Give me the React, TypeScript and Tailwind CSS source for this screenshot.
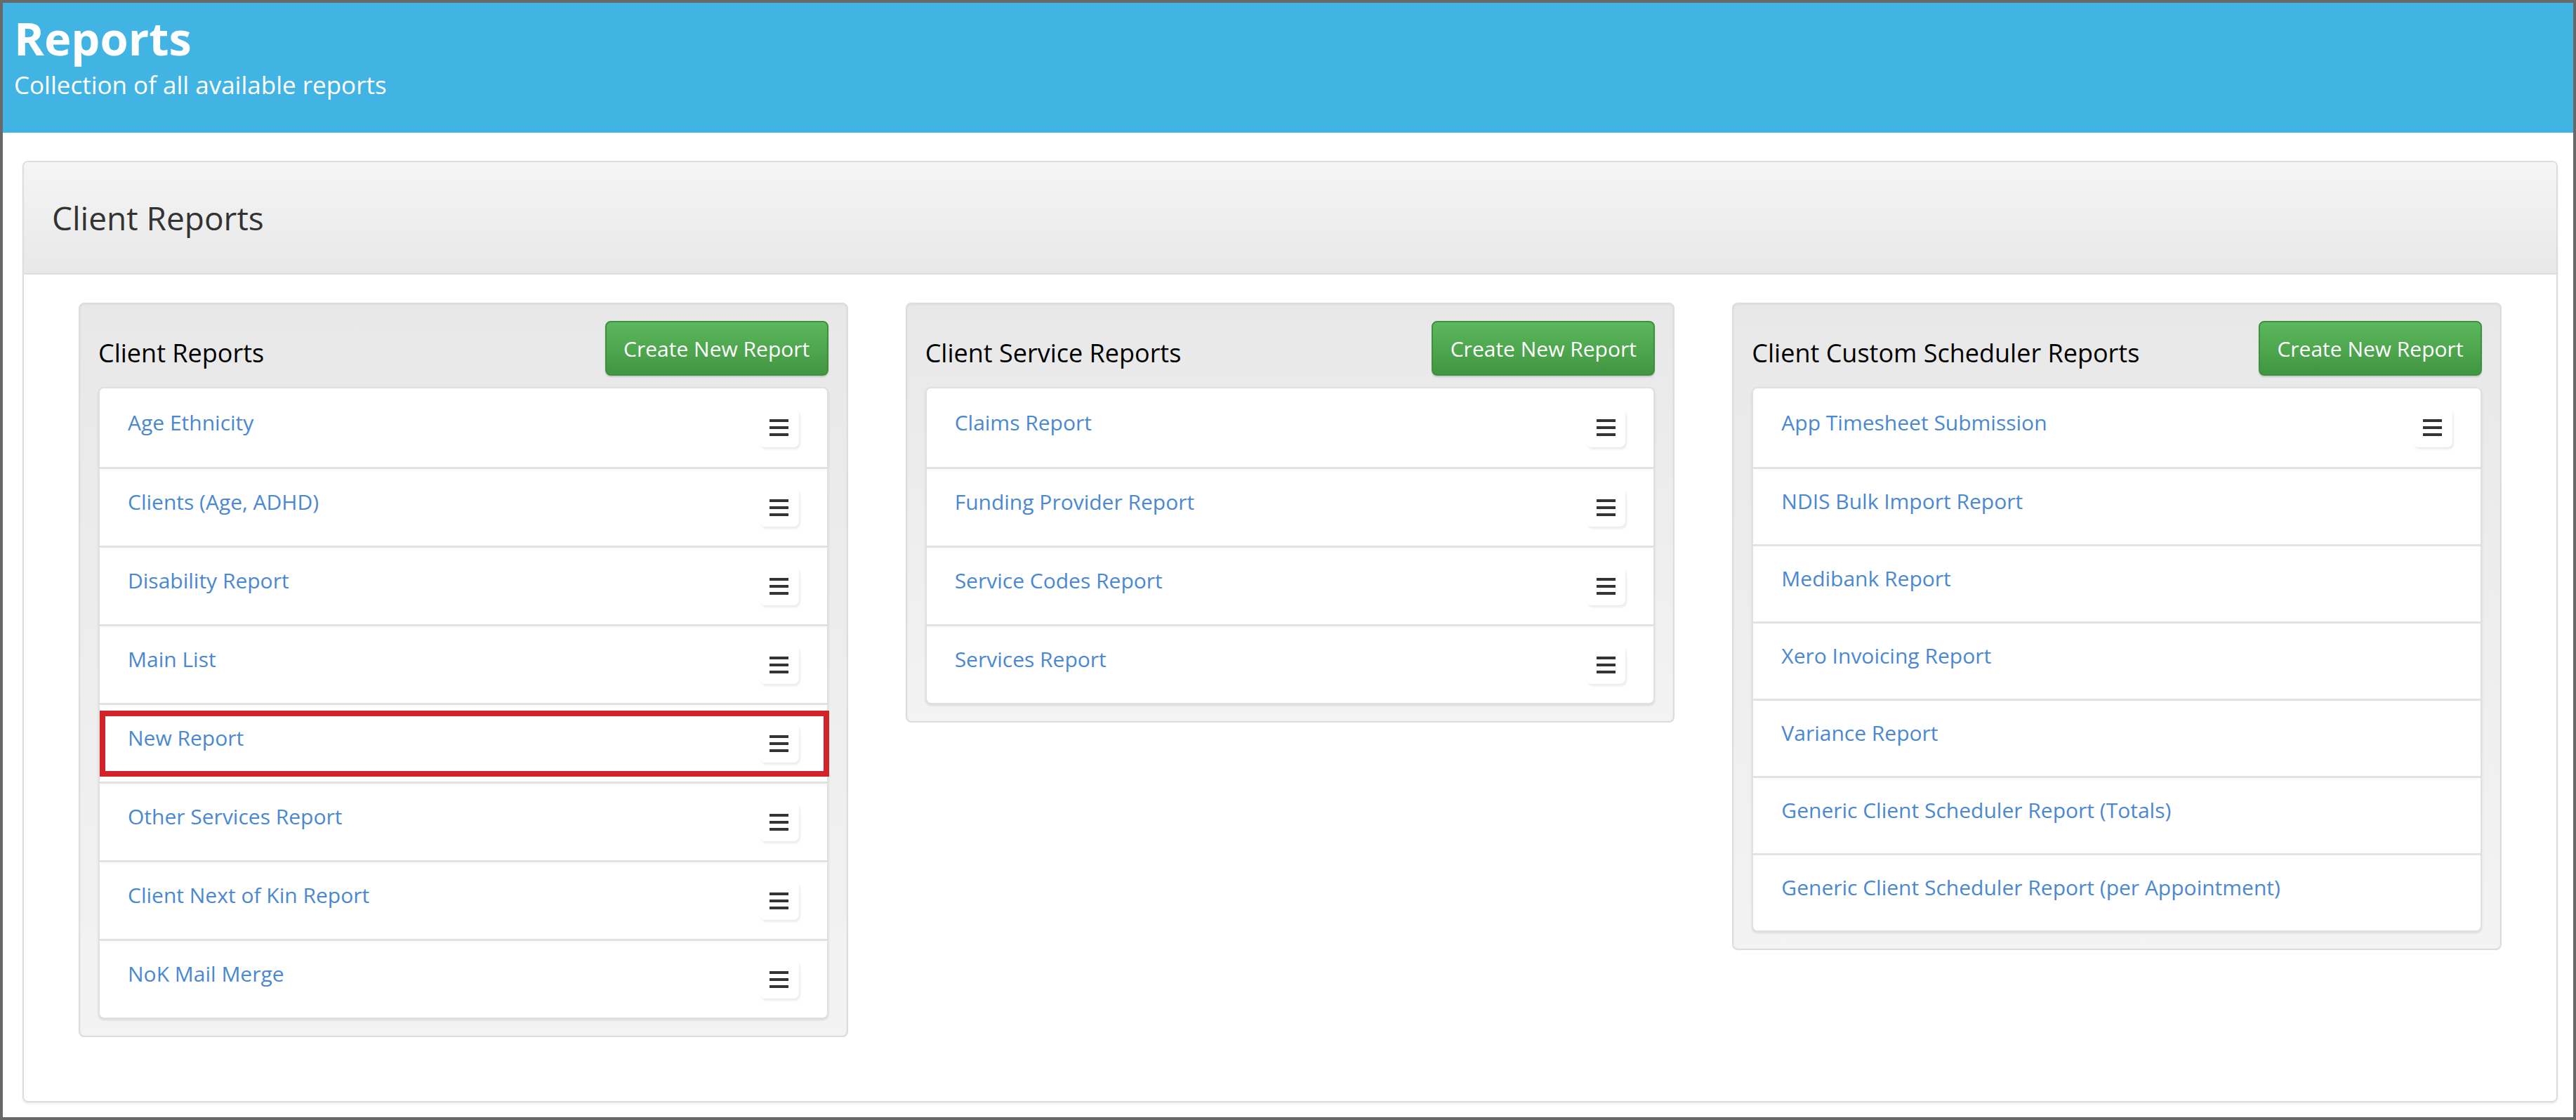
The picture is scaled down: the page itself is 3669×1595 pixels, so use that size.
import React from "react";

type Report = { name: string; menu: boolean; flagged?: boolean };

const groups: { title: string; reports: Report[] }[] = [
  {
    title: "Client Reports",
    reports: [
      { name: "Age Ethnicity", menu: true },
      { name: "Clients (Age, ADHD)", menu: true },
      { name: "Disability Report", menu: true },
      { name: "Main List", menu: true },
      { name: "New Report", menu: true, flagged: true },
      { name: "Other Services Report", menu: true },
      { name: "Client Next of Kin Report", menu: true },
      { name: "NoK Mail Merge", menu: true },
    ],
  },
  {
    title: "Client Service Reports",
    reports: [
      { name: "Claims Report", menu: true },
      { name: "Funding Provider Report", menu: true },
      { name: "Service Codes Report", menu: true },
      { name: "Services Report", menu: true },
    ],
  },
  {
    title: "Client Custom Scheduler Reports",
    reports: [
      { name: "App Timesheet Submission", menu: true },
      { name: "NDIS Bulk Import Report", menu: false },
      { name: "Medibank Report", menu: false },
      { name: "Xero Invoicing Report", menu: false },
      { name: "Variance Report", menu: false },
      { name: "Generic Client Scheduler Report (Totals)", menu: false },
      { name: "Generic Client Scheduler Report (per Appointment)", menu: false },
    ],
  },
];

const font = { fontFamily: '"Open Sans", "Noto Sans", sans-serif' };

function MenuButton() {
  return (
    <button className="flex h-[55px] w-[56px] flex-col items-center justify-center gap-[6px] rounded-[8px] bg-white shadow-[2px_3px_3px_rgba(0,0,0,0.08)]">
      <span className="h-[4px] w-[27px] bg-[#333]" />
      <span className="h-[4px] w-[27px] bg-[#333]" />
      <span className="h-[4px] w-[27px] bg-[#333]" />
    </button>
  );
}

function ReportRow({ report, first }: { report: Report; first: boolean }) {
  return (
    <div
      className={`relative flex items-center justify-between px-[40px] ${
        report.menu ? "h-[112px]" : "h-[110px]"
      } ${first ? "" : "border-t-[3px] border-[#e2e2e2]"}`}
    >
      <a className="mb-[16px] text-[30px] text-[#4a88d2]">{report.name}</a>
      {report.menu && <MenuButton />}
      {report.flagged && (
        <div className="pointer-events-none absolute top-[8px] bottom-[7px] left-0 right-[-3px] border-[8px] border-[#d2232a]" />
      )}
    </div>
  );
}

function ReportGroup({ title, reports }: { title: string; reports: Report[] }) {
  return (
    <div className="rounded-[8px] border-2 border-[#dcdcdc] bg-gradient-to-b from-[#e8e8e8] to-[#f3f3f3] px-[26px] pt-[24px] pb-[24px] shadow-[inset_0_1px_3px_rgba(0,0,0,0.05)]">
      <div className="flex items-center justify-between">
        <h4 className="mt-[14px] text-[36px] font-medium text-black">{title}</h4>
        <button className="h-[78px] w-[318px] rounded-[8px] border-2 border-[#3e8f3e] bg-gradient-to-b from-[#5cb85c] to-[#419641] text-[30px] text-white shadow-[0_2px_2px_rgba(0,0,0,0.15)]">
          Create New Report
        </button>
      </div>
      <div className="mt-[16px] rounded-[8px] border-2 border-[#e0e0e0] bg-white shadow-[0_2px_3px_rgba(0,0,0,0.1)]">
        {reports.map((r, i) => (
          <ReportRow key={r.name} report={r} first={i === 0} />
        ))}
      </div>
    </div>
  );
}

export default function App() {
  return (
    <div
      className="flex h-[1595px] w-full flex-col border-4 border-[#686868] bg-white"
      style={font}
    >
      <header className="h-[185px] bg-[#42b4e4] px-[16px] pt-[8px] text-white">
        <h1 className="text-[65px] leading-[84px] font-bold">Reports</h1>
        <p className="text-[35px] leading-[50px]">Collection of all available reports</p>
      </header>

      <main className="mt-[40px] ml-[28px] mr-[22px] h-[1341px] rounded-[8px] border-2 border-[#dddddd] shadow-[0_2px_3px_rgba(0,0,0,0.08)]">
        <div className="flex h-[160px] items-center rounded-t-[8px] border-b-2 border-[#dddddd] bg-gradient-to-b from-[#f5f5f5] to-[#e8e8e8] px-[40px]">
          <h2 className="text-[46px] text-[#333]">Client Reports</h2>
        </div>
        <div className="grid grid-cols-3 items-start gap-[82px] px-[78px] pt-[40px]">
          {groups.map((g) => (
            <ReportGroup key={g.title} title={g.title} reports={g.reports} />
          ))}
        </div>
      </main>
    </div>
  );
}
